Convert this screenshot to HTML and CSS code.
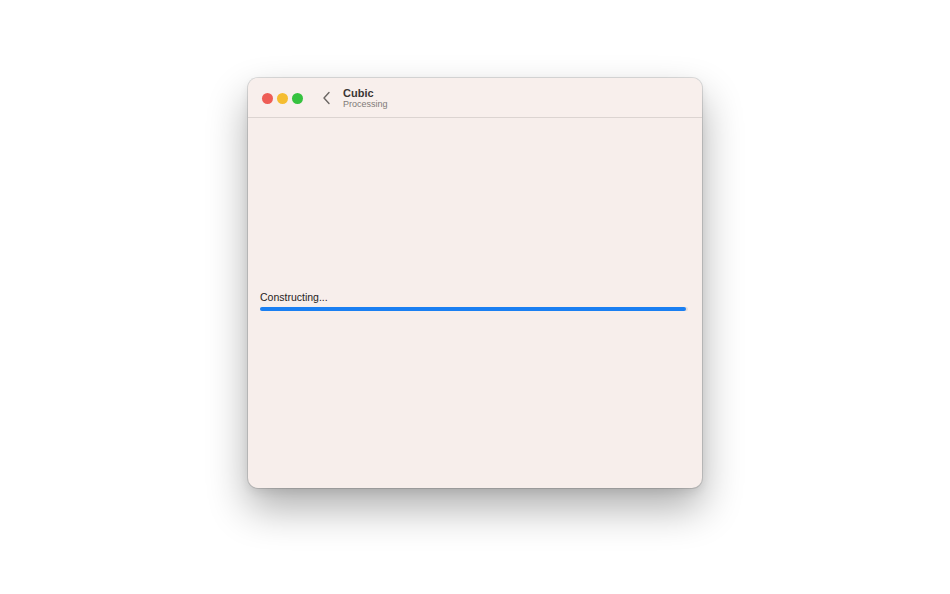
FILE: index.html
```html
<!DOCTYPE html>
<html lang="en">
<head>
<meta charset="utf-8">
<title>Cubic</title>
<link rel="stylesheet" href="styles.css">
</head>
<body>
<div class="window">
  <header class="titlebar">
    <div class="lights">
      <span class="light red"></span>
      <span class="light yellow"></span>
      <span class="light green"></span>
    </div>
    <svg class="back" width="10" height="14" viewBox="0 0 10 14"><path d="M7 1.5 L2 7 L7 12.5" fill="none" stroke="#6b6663" stroke-width="1.4" stroke-linecap="round" stroke-linejoin="round"/></svg>
    <div class="titles">
      <div class="title">Cubic</div>
      <div class="subtitle">Processing</div>
    </div>
  </header>
  <main class="content">
    <div class="progress-block">
      <div class="label">Constructing...</div>
      <div class="track"><div class="fill" style="width:99.5%"></div></div>
    </div>
  </main>
</div>
</body>
</html>
```

FILE: styles.css
```css
html, body {
  margin: 0;
  padding: 0;
  background: #ffffff;
  font-family: "Liberation Sans", Arial, sans-serif;
}
body {
  display: flex;
  flex-direction: column;
  align-items: center;
  padding-top: 78px;
  height: 594px;
  box-sizing: border-box;
}
.window {
  width: 454px;
  height: 410px;
  border-radius: 10px;
  background: #f7eeeb;
  box-shadow: 0 0 0 1px rgba(0,0,0,0.12), 0 20px 40px rgba(0,0,0,0.32), 0 4px 10px rgba(0,0,0,0.08);
  display: flex;
  flex-direction: column;
  overflow: hidden;
}
.titlebar {
  height: 40px;
  flex: none;
  box-sizing: border-box;
  border-bottom: 1px solid #dcd4d1;
  background: #f8efec;
  display: flex;
  align-items: center;
  padding-left: 14px;
}
.lights {
  display: flex;
  gap: 4px;
  margin-top: 1px;
}
.light {
  width: 11px;
  height: 11px;
  border-radius: 50%;
  display: block;
}
.red { background: #ee5d56; }
.yellow { background: #f5bd31; }
.green { background: #36c23f; }
.back {
  margin-left: 19px;
  margin-top: 1px;
}
.titles {
  margin-left: 11px;
  display: flex;
  flex-direction: column;
  margin-top: 1px;
}
.title {
  font-size: 11px;
  font-weight: bold;
  color: #3a3634;
  line-height: 12px;
}
.subtitle {
  font-size: 9px;
  color: #807a77;
  line-height: 11px;
}
.content {
  flex: 1;
  padding: 173px 14px 0 12px;
}
.label {
  font-size: 10.5px;
  color: #262322;
  line-height: 12px;
}
.track {
  margin-top: 4px;
  height: 4px;
  border-radius: 2px;
  background: #e4dbd8;
}
.fill {
  height: 4px;
  border-radius: 2px;
  background: #1a7ff2;
}
```
